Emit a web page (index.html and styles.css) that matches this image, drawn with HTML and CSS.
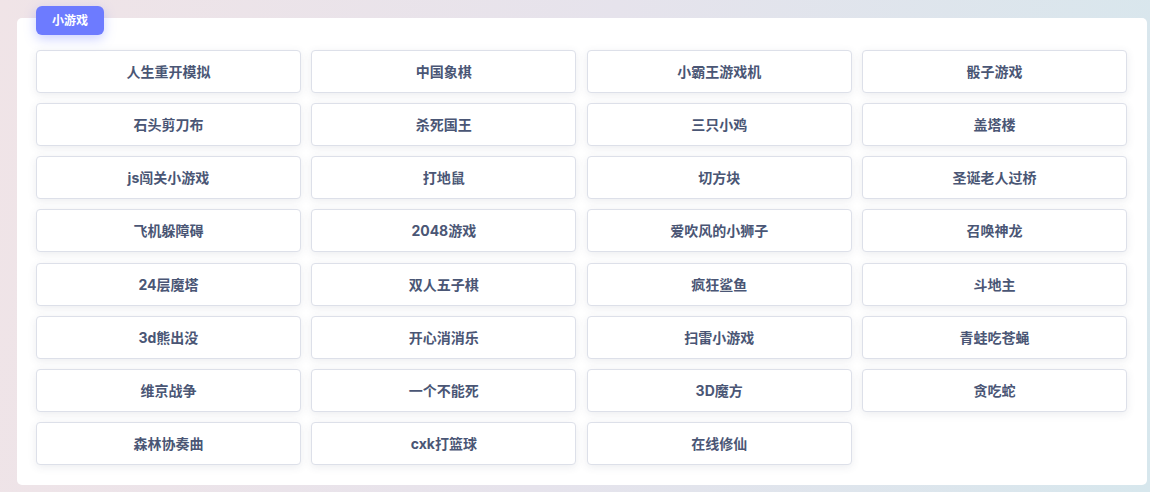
FILE: index.html
```html
<!DOCTYPE html>
<html lang="zh">
<head>
    <meta charset="UTF-8">
    <title>小游戏</title>
    <link rel="stylesheet" href="styles.css">
</head>
<body>

    <!-- 小游戏面板 -->
    <div class="panel">
        <span class="badge">小游戏</span>
        <div class="game-grid">
            <a class="game">人生重开模拟</a>
            <a class="game">中国象棋</a>
            <a class="game">小霸王游戏机</a>
            <a class="game">骰子游戏</a>
            <a class="game">石头剪刀布</a>
            <a class="game">杀死国王</a>
            <a class="game">三只小鸡</a>
            <a class="game">盖塔楼</a>
            <a class="game">js闯关小游戏</a>
            <a class="game">打地鼠</a>
            <a class="game">切方块</a>
            <a class="game">圣诞老人过桥</a>
            <a class="game">飞机躲障碍</a>
            <a class="game">2048游戏</a>
            <a class="game">爱吹风的小狮子</a>
            <a class="game">召唤神龙</a>
            <a class="game">24层魔塔</a>
            <a class="game">双人五子棋</a>
            <a class="game">疯狂鲨鱼</a>
            <a class="game">斗地主</a>
            <a class="game">3d熊出没</a>
            <a class="game">开心消消乐</a>
            <a class="game">扫雷小游戏</a>
            <a class="game">青蛙吃苍蝇</a>
            <a class="game">维京战争</a>
            <a class="game">一个不能死</a>
            <a class="game">3D魔方</a>
            <a class="game">贪吃蛇</a>
            <a class="game">森林协奏曲</a>
            <a class="game">cxk打篮球</a>
            <a class="game">在线修仙</a>
        </div>
    </div>

</body>
</html>
```

FILE: styles.css
```css
html, body {
    height: 100%;
}
body {
    margin: 0;
    padding: 18px 3px 0 17px;
    box-sizing: border-box;
    font-family: "Inter", "Noto Sans CJK SC", sans-serif;
    background: linear-gradient(100deg, #f0e4e7 0%, #e6e3ec 50%, #d7e7ed 100%);
}
.panel {
    position: relative;
    width: 1130px;
    height: 467px;
    box-sizing: border-box;
    padding: 32px 20px 0 19px;
    background-color: #ffffff;
    border-radius: 5px;
}
.badge {
    position: absolute;
    top: -12px;
    left: 19px;
    width: 68px;
    height: 29px;
    line-height: 29px;
    text-align: center;
    font-size: 12px;
    font-weight: 700;
    color: #ffffff;
    background-color: #6d7bff;
    border-radius: 6px;
    box-shadow: 0 4px 12px rgba(109, 123, 255, 0.35);
}
.game-grid {
    display: grid;
    grid-template-columns: repeat(4, 1fr);
    column-gap: 10.5px;
    row-gap: 10.15px;
}
.game {
    display: block;
    height: 43px;
    line-height: 41px;
    box-sizing: border-box;
    text-align: center;
    font-size: 14px;
    font-weight: 700;
    color: #4a5675;
    background-color: #ffffff;
    border: 1px solid #dde0e9;
    border-radius: 4px;
    box-shadow: 0 2px 9px rgba(60, 70, 100, 0.1);
    cursor: pointer;
}
.game:hover {
    color: #6d7bff;
}
```
